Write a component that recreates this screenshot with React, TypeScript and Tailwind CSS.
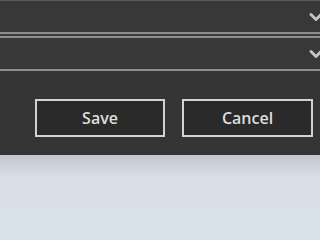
import { ChevronDown } from "lucide-react";

const Dropdown = () => (
  <div className="flex h-[31px] items-center justify-end bg-[#383838]">
    <ChevronDown className="mr-[-6px] h-5 w-5 text-[#c4c4c4]" strokeWidth={3.5} />
  </div>
);

export default function App() {
  return (
    <div className="flex h-[240px] w-[320px] flex-col overflow-hidden bg-[#353535] font-['Open_Sans',sans-serif]">
      <div className="h-px bg-[#5c5c5c]" />
      <Dropdown />
      <div className="h-[2px] bg-[#8e8e8e]" />
      <div className="h-[2px] bg-[#3c3c3c]" />
      <div className="h-[2px] bg-[#8e8e8e]" />
      <Dropdown />
      <div className="h-[2px] bg-[#8e8e8e]" />

      <div className="flex h-[84px] items-start gap-[17px] pl-[35px] pt-[28px]">
        <button className="h-[38px] w-[130px] border-2 border-[#d2d2d2] bg-[#2a2a2a] text-[16px] font-semibold text-[#dedede]">
          Save
        </button>
        <button className="h-[38px] w-[131px] border-2 border-[#d2d2d2] bg-[#2a2a2a] text-[16px] font-semibold text-[#dedede]">
          Cancel
        </button>
      </div>

      <div className="flex-1 bg-gradient-to-b from-[#c2c4ca] via-[#d8dfe8] via-25% to-[#d9e1eb]" />
    </div>
  );
}
